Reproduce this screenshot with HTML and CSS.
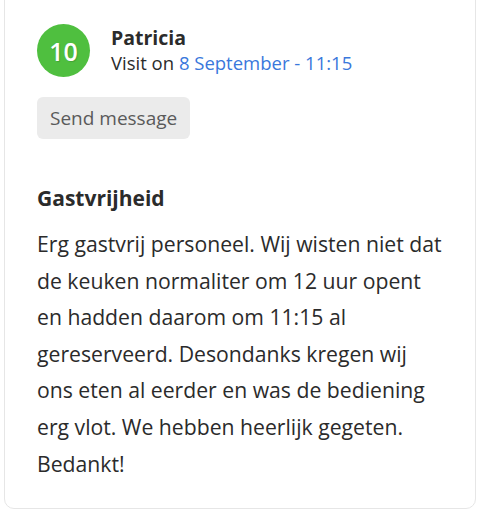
FILE: index.html
```html
<!DOCTYPE html>
<html lang="en">
<head>
    <meta charset="UTF-8">
    <meta name="viewport" content="width=device-width, initial-scale=1.0">
    <title>Review</title>
    <link rel="stylesheet" href="styles.css">
</head>
<body>
<div class="review">
    <div class="review-head">
        <div class="score">10</div>
        <div class="who">
            <div class="name">Patricia</div>
            <div class="visit">Visit on <span class="date">8 September - 11:15</span></div>
        </div>
    </div>
    <button type="button" class="message-btn">Send message</button>
    <h2 class="topic">Gastvrijheid</h2>
    <p class="text">Erg gastvrij personeel. Wij wisten niet dat de keuken normaliter om 12 uur opent en hadden daarom om 11:15 al gereserveerd. Desondanks kregen wij ons eten al eerder en was de bediening erg vlot. We hebben heerlijk gegeten. Bedankt!</p>
</div>
</body>
</html>
```
FILE: styles.css
```css
body {
    margin: 0;
    background: #fff;
    font-family: 'Open Sans', sans-serif;
    color: #2b2b2b;
}
.review {
    margin: -12px 5px 0 4px;
    height: 521px;
    box-sizing: border-box;
    border: 1px solid #e6e6e6;
    border-radius: 10px;
    padding: 35px 30px 0 32px;
}
.review-head {
    display: flex;
    align-items: center;
    gap: 21px;
}
.score {
    width: 53px;
    height: 53px;
    border-radius: 50%;
    background: #4fbf3f;
    color: #fff;
    font-size: 25px;
    font-weight: 600;
    display: flex;
    align-items: center;
    justify-content: center;
    text-shadow: 1px 1px 1px rgba(0, 0, 0, 0.15);
}
.name {
    font-size: 19.5px;
    font-weight: 700;
    line-height: 24px;
}
.visit {
    font-size: 18.5px;
    line-height: 26px;
}
.date {
    color: #3a78dc;
}
.message-btn {
    margin-top: 20px;
    background: #ebebeb;
    border: none;
    border-radius: 6px;
    color: #5a5a5a;
    font-family: inherit;
    font-size: 19px;
    padding: 0 13px;
    height: 42px;
}
.topic {
    margin: 45px 0 0;
    font-size: 21px;
    font-weight: 700;
    line-height: 28px;
}
.text {
    margin: 14px 0 0;
    font-size: 21.2px;
    line-height: 36.6px;
}
```
